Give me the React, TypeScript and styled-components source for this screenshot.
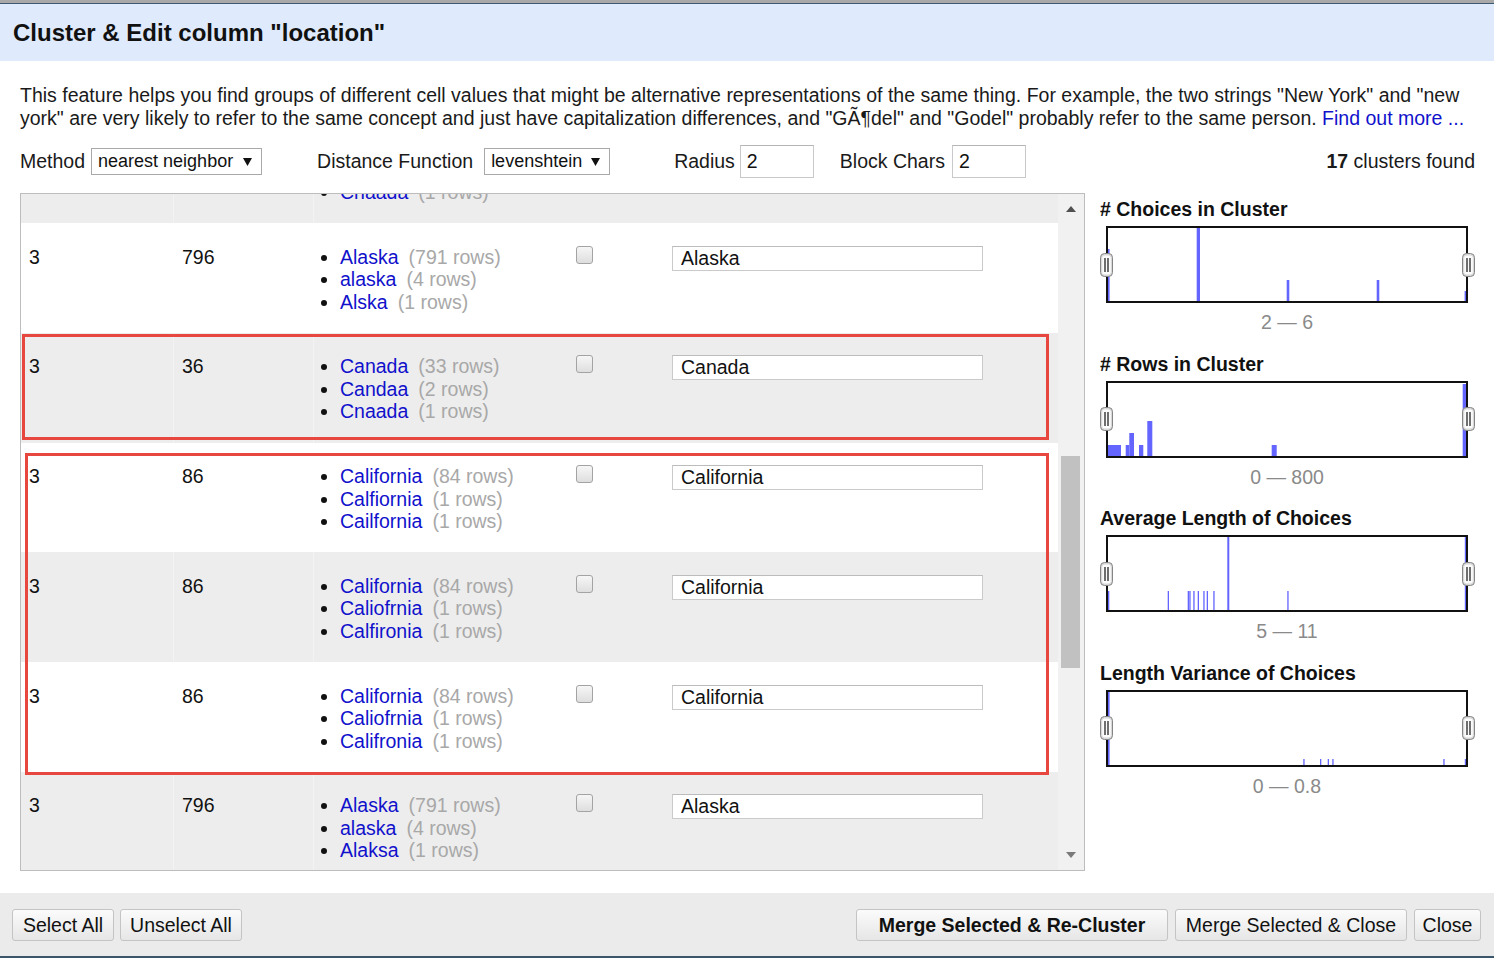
import React from "react";
import styled, { createGlobalStyle } from "styled-components";

const GlobalStyle = createGlobalStyle`
  html, body { margin: 0; padding: 0; }
  body {
    font-family: "Liberation Sans", Arial, sans-serif;
    color: #111;
    background: #fff;
    overflow: hidden;
  }
  * { box-sizing: border-box; }
`;

const Page = styled.div`
  width: 1494px;
  height: 958px;
  display: flex;
  flex-direction: column;
  overflow: hidden;
`;

const TopStrip = styled.div`
  flex: none;
  height: 4px;
  background: #a9a9a9;
  border-bottom: 1px solid #3f5a70;
`;

const Header = styled.div`
  flex: none;
  height: 57px;
  background: #dfeafc;
  display: flex;
  align-items: center;
  padding-left: 13px;
`;

const Title = styled.h1`
  margin: 0;
  font-size: 24px;
  font-weight: bold;
  color: #111;
`;

const Body = styled.div`
  flex: 1;
  display: flex;
  flex-direction: column;
  padding: 23px 19px 0 20px;
  min-height: 0;
`;

const Description = styled.p`
  margin: 0;
  font-size: 19.5px;
  line-height: 23px;
  color: #1a1a1a;
`;

const Link = styled.a`
  color: #1111cc;
  text-decoration: none;
`;

const Controls = styled.div`
  margin-top: 15px;
  height: 33px;
  display: flex;
  align-items: center;
  font-size: 19.5px;
`;

const Label = styled.span<{ $ml?: number }>`
  margin-left: ${(p) => p.$ml ?? 0}px;
  white-space: nowrap;
  color: #1a1a1a;
`;

const FakeSelect = styled.div<{ $w: number; $ml: number }>`
  margin-left: ${(p) => p.$ml}px;
  width: ${(p) => p.$w}px;
  height: 27px;
  border: 1px solid #a9a9a9;
  background: #fff;
  display: flex;
  align-items: center;
  justify-content: space-between;
  padding: 0 9px 0 6px;
  font-size: 18px;
  color: #111;
`;

const TextBox = styled.input<{ $ml: number }>`
  margin-left: ${(p) => p.$ml}px;
  width: 74px;
  height: 33px;
  border: 1px solid #c9c9c9;
  border-top-color: #b5b5b5;
  padding: 0 6px;
  font-family: "Liberation Sans", Arial, sans-serif;
  font-size: 19.5px;
  color: #111;
  outline: none;
`;

const Found = styled.span`
  margin-left: auto;
  white-space: nowrap;
  color: #1a1a1a;
  b { font-weight: bold; }
`;

const Main = styled.div`
  margin-top: 15px;
  height: 678px;
  display: flex;
  gap: 15px;
`;

const TableFrame = styled.div`
  width: 1065px;
  height: 678px;
  border: 1px solid #bdbdbd;
  display: flex;
`;

const Viewport = styled.div`
  position: relative;
  width: 1037px;
  height: 100%;
  overflow: hidden;
`;

const RowList = styled.div<{ $offset: number }>`
  margin-top: ${(p) => -p.$offset}px;
`;

const Row = styled.div<{ $shade: boolean }>`
  height: 109.8px;
  display: grid;
  grid-template-columns: 153px 140px 254px 96px 1fr;
  background: ${(p) => (p.$shade ? "#ededed" : "#ffffff")};
  font-size: 19.5px;
  line-height: 22.5px;
`;

const Cell = styled.div<{ $divider?: boolean }>`
  padding: 22.5px 0 0 8px;
  color: #111;
  border-right: ${(p) => (p.$divider ? "1px solid rgba(255,255,255,0.35)" : "none")};
`;

const ChoiceList = styled.ul`
  margin: 0;
  padding: 0 0 0 18px;
  list-style: disc;
  li::marker { color: #111; }
`;

const ChoiceName = styled.span`
  color: #1111cc;
`;

const ChoiceCount = styled.span`
  color: #a8a8a8;
  margin-left: 10px;
`;

const CheckBox = styled.span`
  display: block;
  width: 17px;
  height: 18px;
  border: 1px solid #a3a3a3;
  border-radius: 3px;
  background: linear-gradient(#f6f6f6, #dedede);
`;

const ValueInput = styled.input`
  display: block;
  width: 311px;
  height: 25px;
  border: 1px solid #cacaca;
  border-top-color: #bcbcbc;
  padding: 0 8px;
  font-family: "Liberation Sans", Arial, sans-serif;
  font-size: 19.5px;
  color: #111;
  background: #fff;
  outline: none;
`;

const Annotation = styled.div<{ $l: number; $t: number; $w: number; $h: number }>`
  position: absolute;
  left: ${(p) => p.$l}px;
  top: ${(p) => p.$t}px;
  width: ${(p) => p.$w}px;
  height: ${(p) => p.$h}px;
  border: 3px solid #e8473f;
  pointer-events: none;
`;

const ScrollBar = styled.div`
  width: 26px;
  height: 100%;
  background: #f1f1f1;
  display: flex;
  flex-direction: column;
`;

const ScrollArrow = styled.div`
  flex: none;
  height: 30px;
  display: flex;
  align-items: center;
  justify-content: center;
`;

const ScrollTrack = styled.div`
  flex: 1;
  padding: 0 4px 0 3px;
`;

const Thumb = styled.div<{ $top: number; $h: number }>`
  margin-top: ${(p) => p.$top}px;
  height: ${(p) => p.$h}px;
  background: #c1c1c1;
`;

const Facets = styled.div`
  width: 375px;
  padding-top: 5px;
`;

const Facet = styled.div`
  margin-bottom: 19.6px;
`;

const FacetTitle = styled.div`
  font-size: 19.5px;
  line-height: 22px;
  font-weight: bold;
  color: #111;
`;

const HistWrap = styled.div`
  position: relative;
  margin: 6px 0 0 6px;
  width: 362px;
  height: 77px;
  border: 2px solid #111;
  background: #fff;
  svg.bars { display: block; }
`;

const Handle = styled.div<{ $side: "left" | "right" }>`
  position: absolute;
  top: 50%;
  ${(p) => (p.$side === "left" ? "left: -8.5px;" : "right: -8.5px;")}
  width: 13px;
  height: 24px;
  transform: translateY(-50%);
  svg { display: block; }
`;

const RangeLabel = styled.div`
  margin: 8px 0 0 6px;
  width: 362px;
  text-align: center;
  font-size: 19.5px;
  line-height: 22px;
  color: #8a8a8a;
`;

const Footer = styled.div`
  flex: none;
  height: 63px;
  margin-top: 22px;
  background: #ebebeb;
  display: flex;
  align-items: center;
  padding: 1px 13px 0 12px;
`;

const BottomLine = styled.div`
  flex: none;
  height: 2px;
  background: #3b556b;
`;

const ButtonGroup = styled.div<{ $gap: number; $push?: boolean }>`
  display: flex;
  gap: ${(p) => p.$gap}px;
  margin-left: ${(p) => (p.$push ? "auto" : "0")};
`;

const Button = styled.button<{ $w: number; $bold?: boolean }>`
  width: ${(p) => p.$w}px;
  height: 32px;
  padding: 0;
  border: 1px solid #c4c4c4;
  border-radius: 3px;
  background: linear-gradient(#fbfbfb, #e6e6e6);
  font-family: "Liberation Sans", Arial, sans-serif;
  font-size: 19.5px;
  font-weight: ${(p) => (p.$bold ? "bold" : "normal")};
  color: #111;
  white-space: nowrap;
`;

type Choice = { name: string; count: number };
type Cluster = { size: number; rows: number; choices: Choice[]; value: string };

const clusters: Cluster[] = [
  {
    size: 3,
    rows: 36,
    value: "Canada",
    choices: [
      { name: "Canada", count: 33 },
      { name: "Candaa", count: 2 },
      { name: "Cnaada", count: 1 },
    ],
  },
  {
    size: 3,
    rows: 796,
    value: "Alaska",
    choices: [
      { name: "Alaska", count: 791 },
      { name: "alaska", count: 4 },
      { name: "Alska", count: 1 },
    ],
  },
  {
    size: 3,
    rows: 36,
    value: "Canada",
    choices: [
      { name: "Canada", count: 33 },
      { name: "Candaa", count: 2 },
      { name: "Cnaada", count: 1 },
    ],
  },
  {
    size: 3,
    rows: 86,
    value: "California",
    choices: [
      { name: "California", count: 84 },
      { name: "Calfiornia", count: 1 },
      { name: "Cailfornia", count: 1 },
    ],
  },
  {
    size: 3,
    rows: 86,
    value: "California",
    choices: [
      { name: "California", count: 84 },
      { name: "Caliofrnia", count: 1 },
      { name: "Calfironia", count: 1 },
    ],
  },
  {
    size: 3,
    rows: 86,
    value: "California",
    choices: [
      { name: "California", count: 84 },
      { name: "Caliofrnia", count: 1 },
      { name: "Califronia", count: 1 },
    ],
  },
  {
    size: 3,
    rows: 796,
    value: "Alaska",
    choices: [
      { name: "Alaska", count: 791 },
      { name: "alaska", count: 4 },
      { name: "Alaksa", count: 1 },
    ],
  },
];

type Bar = [number, number, number, number];

const short = (xs: number[], y: number, h: number, w = 1.4): Bar[] =>
  xs.map((x) => [x, y, w, h] as Bar);

const facets: { title: string; range: string; bars: Bar[] }[] = [
  {
    title: "# Choices in Cluster",
    range: "2 \u2014 6",
    bars: [
      [0, 21, 1.6, 52],
      [88.7, 0, 3.3, 73],
      [178.7, 52, 2.6, 21],
      [268.7, 52, 2.6, 21],
      [356.6, 63, 1.4, 10],
    ],
  },
  {
    title: "# Rows in Cluster",
    range: "0 \u2014 800",
    bars: [
      [0, 62, 13, 11],
      [17.7, 62, 3.6, 11],
      [21.3, 50, 4.7, 23],
      [31, 62, 4.3, 11],
      [39.3, 38, 5, 35],
      [163.7, 62, 5, 11],
      [354.7, 1, 3.3, 72],
    ],
  },
  {
    title: "Average Length of Choices",
    range: "5 \u2014 11",
    bars: [
      ...short([0, 59.7, 79.7, 81.3, 85.3, 89.7, 95.3, 98.7, 105.3, 179.3], 54, 19, 1.3),
      [119.3, 0, 2, 73],
      [356.8, 0, 1.2, 73],
    ],
  },
  {
    title: "Length Variance of Choices",
    range: "0 \u2014 0.8",
    bars: [
      [0, 0, 1.6, 73],
      ...short([195.3, 212, 219.7, 224.3, 335.3, 356.8], 67, 6, 1.3),
    ],
  },
];

const HandleIcon = () => (
  <svg width="13" height="24" viewBox="0 0 13 24">
    <rect x="0.5" y="0.5" width="12" height="23" rx="4" fill="#d8d8d8" stroke="#858585" />
    <rect x="2.2" y="2.5" width="8.6" height="19" rx="2.5" fill="#fbfbfb" />
    <line x1="5" y1="5" x2="5" y2="19" stroke="#222" strokeWidth="1.3" />
    <line x1="8" y1="5" x2="8" y2="19" stroke="#222" strokeWidth="1.3" />
  </svg>
);

const Arrow = ({ dir, color }: { dir: "up" | "down"; color: string }) => (
  <svg width="10" height="6" viewBox="0 0 10 6">
    <polygon points={dir === "up" ? "0,6 5,0 10,6" : "0,0 10,0 5,6"} fill={color} />
  </svg>
);

const SelectCaret = () => (
  <svg width="9" height="8" viewBox="0 0 9 8">
    <polygon points="0,0 9,0 4.5,8" fill="#111" />
  </svg>
);

export default function App() {
  return (
    <>
      <GlobalStyle />
      <Page>
        <TopStrip />
        <Header>
          <Title>Cluster &amp; Edit column "location"</Title>
        </Header>
        <Body>
          <Description>
            This feature helps you find groups of different cell values that might be alternative
            representations of the same thing. For example, the two strings "New York" and "new
            york" are very likely to refer to the same concept and just have capitalization
            differences, and "GÃ¶del" and "Godel" probably refer to the same person.{" "}
            <Link href="#">Find out more ...</Link>
          </Description>
          <Controls>
            <Label>Method</Label>
            <FakeSelect $w={171} $ml={6}>
              nearest neighbor
              <SelectCaret />
            </FakeSelect>
            <Label $ml={55}>Distance Function</Label>
            <FakeSelect $w={126} $ml={11}>
              levenshtein
              <SelectCaret />
            </FakeSelect>
            <Label $ml={64}>Radius</Label>
            <TextBox $ml={5} defaultValue="2" readOnly />
            <Label $ml={26}>Block Chars</Label>
            <TextBox $ml={7} defaultValue="2" readOnly />
            <Found>
              <b>17</b> clusters found
            </Found>
          </Controls>
          <Main>
            <TableFrame>
              <Viewport>
                <RowList $offset={80.8}>
                  {clusters.map((c, i) => (
                    <Row key={i} $shade={i % 2 === 0}>
                      <Cell $divider={i % 2 === 0}>{c.size}</Cell>
                      <Cell $divider={i % 2 === 0}>{c.rows}</Cell>
                      <Cell>
                        <ChoiceList>
                          {c.choices.map((ch, j) => (
                            <li key={j}>
                              <ChoiceName>{ch.name}</ChoiceName>
                              <ChoiceCount>({ch.count} rows)</ChoiceCount>
                            </li>
                          ))}
                        </ChoiceList>
                      </Cell>
                      <Cell>
                        <CheckBox />
                      </Cell>
                      <Cell>
                        <ValueInput defaultValue={c.value} readOnly />
                      </Cell>
                    </Row>
                  ))}
                </RowList>
                <Annotation $l={1} $t={140} $w={1027} $h={106} />
                <Annotation $l={4} $t={259} $w={1024} $h={322} />
              </Viewport>
              <ScrollBar>
                <ScrollArrow>
                  <Arrow dir="up" color="#505050" />
                </ScrollArrow>
                <ScrollTrack>
                  <Thumb $top={232} $h={212} />
                </ScrollTrack>
                <ScrollArrow>
                  <Arrow dir="down" color="#7a7a7a" />
                </ScrollArrow>
              </ScrollBar>
            </TableFrame>
            <Facets>
              {facets.map((f) => (
                <Facet key={f.title}>
                  <FacetTitle>{f.title}</FacetTitle>
                  <HistWrap>
                    <svg className="bars" width="358" height="73" viewBox="0 0 358 73">
                      {f.bars.map(([x, y, w, h], k) => (
                        <rect key={k} x={x} y={y} width={w} height={h} fill="#6464ff" />
                      ))}
                    </svg>
                    <Handle $side="left">
                      <HandleIcon />
                    </Handle>
                    <Handle $side="right">
                      <HandleIcon />
                    </Handle>
                  </HistWrap>
                  <RangeLabel>{f.range}</RangeLabel>
                </Facet>
              ))}
            </Facets>
          </Main>
        </Body>
        <Footer>
          <ButtonGroup $gap={6}>
            <Button $w={102}>Select All</Button>
            <Button $w={122}>Unselect All</Button>
          </ButtonGroup>
          <ButtonGroup $gap={7} $push>
            <Button $w={312} $bold>
              Merge Selected &amp; Re-Cluster
            </Button>
            <Button $w={232}>Merge Selected &amp; Close</Button>
            <Button $w={67}>Close</Button>
          </ButtonGroup>
        </Footer>
        <BottomLine />
      </Page>
    </>
  );
}
